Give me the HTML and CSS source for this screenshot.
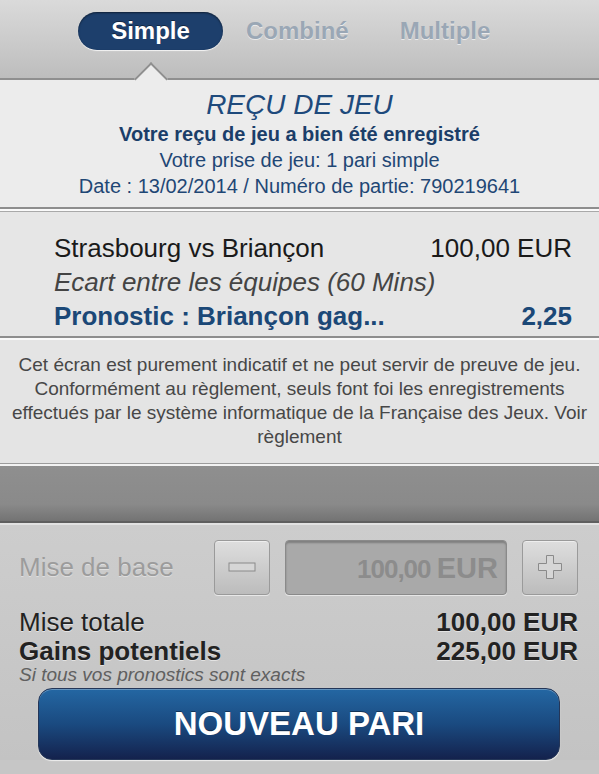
FILE: index.html
```html
<!DOCTYPE html>
<html lang="fr">

<head>
    <meta charset="UTF-8">
    <title>Reçu de jeu</title>
    <link rel="stylesheet" href="styles.css">
</head>

<body>

    <div class="tabs">
        <span class="tab active">Simple</span>
        <span class="tab combo">Combiné</span>
        <span class="tab multi">Multiple</span>
    </div>

    <div class="receipt">
        <h1>REÇU DE JEU</h1>
        <p class="ok">Votre reçu de jeu a bien été enregistré</p>
        <p>Votre prise de jeu: 1 pari simple</p>
        <p>Date : 13/02/2014 / Numéro de partie: 790219641</p>
    </div>

    <div class="divider double"></div>

    <div class="bet">
        <div class="row">
            <span>Strasbourg vs Briançon</span>
            <span>100,00 EUR</span>
        </div>
        <div class="row type">
            <span>Ecart entre les équipes (60 Mins)</span>
        </div>
        <div class="row pick">
            <span>Pronostic : Briançon gag...</span>
            <span>2,25</span>
        </div>
    </div>

    <div class="divider"></div>

    <div class="notice">
        Cet écran est purement indicatif et ne peut servir de preuve de jeu.<br>
        Conformément au règlement, seuls font foi les enregistrements<br>
        effectués par le système informatique de la Française des Jeux. Voir<br>
        règlement
    </div>

    <div class="band"></div>

    <div class="panel">
        <div class="stake">
            <span class="stake_label">Mise de base</span>
            <span class="step">
                <svg width="28" height="10" viewBox="0 0 28 10">
                    <rect x="1" y="1" width="26" height="8" fill="#d6d6d6" stroke="#8a8a8a" stroke-width="1" />
                </svg>
            </span>
            <span class="amount">100,00 <b>EUR</b></span>
            <span class="step">
                <svg width="26" height="26" viewBox="0 0 26 26">
                    <path d="M9.5 1.5h7v8h8v7h-8v8h-7v-8h-8v-7h8z" fill="#d6d6d6" stroke="#8a8a8a" stroke-width="1" />
                </svg>
            </span>
        </div>
        <div class="line total">
            <span>Mise totale</span>
            <b>100,00 EUR</b>
        </div>
        <div class="line gains">
            <b>Gains potentiels</b>
            <b>225,00 EUR</b>
        </div>
        <div class="hint">Si tous vos pronostics sont exacts</div>
        <button>NOUVEAU PARI</button>
    </div>

</body>

</html>
```

FILE: styles.css
```css
body {
    margin: 0;
    width: 599px;
    height: 774px;
    overflow: hidden;
    font-family: "Liberation Sans", Arial, sans-serif;
    background: #c6c6c6;
}

.tabs {
    height: 80px;
    box-sizing: border-box;
    padding: 12px 0 0 78px;
    display: flex;
    align-items: flex-start;
    background: linear-gradient(#dadada, #c9c9c9 60%, #bdbdbd);
    border-bottom: 2px solid #8f8f8f;
}

.tab {
    height: 38px;
    line-height: 38px;
    font-size: 24px;
    font-weight: bold;
    color: #9aa7b5;
    text-shadow: 0 1px 0 rgba(255, 255, 255, 0.6);
}

.tab.active {
    width: 145px;
    text-align: center;
    color: #fff;
    background: #1d3f6c;
    border-radius: 20px;
    box-shadow: 0 1px 1px rgba(255, 255, 255, 0.8), inset 0 1px 2px rgba(0, 0, 0, 0.5);
    text-shadow: 0 -1px 0 rgba(0, 0, 0, 0.4);
}

.tab.combo {
    margin-left: 23px;
}

.tab.multi {
    margin-left: 51px;
}

.receipt {
    position: relative;
    background: #ececec;
    text-align: center;
    padding: 9px 0 8px;
    color: #1f4775;
}

/* notch under the active tab */
.receipt::before {
    content: "";
    position: absolute;
    left: 139px;
    top: -13px;
    width: 22px;
    height: 22px;
    background: #ececec;
    border-left: 2px solid #8f8f8f;
    border-top: 2px solid #8f8f8f;
    transform: rotate(45deg);
}

.receipt h1 {
    position: relative;
    margin: 0;
    font-size: 28px;
    line-height: 32px;
    font-weight: normal;
    font-style: italic;
    color: #1e4a7c;
}

.receipt p {
    margin: 0;
    font-size: 20px;
    line-height: 26px;
}

.receipt p.ok {
    font-weight: bold;
    color: #1b3e69;
}

.divider {
    height: 4px;
    background: linear-gradient(#8e8e8e 0, #8e8e8e 2px, #fafafa 2px, #fafafa 4px);
}

.divider.double {
    height: 7px;
    background: linear-gradient(#8e8e8e 0, #8e8e8e 2px, #fafafa 2px, #fafafa 4px, #a9a9a9 4px, #a9a9a9 5px, #e6e6e6 5px);
}

.bet {
    background: #e6e6e6;
    padding: 17px 27px 3px 54px;
}

.row {
    display: flex;
    justify-content: space-between;
    font-size: 26px;
    line-height: 34px;
    color: #1a1a1a;
}

.row.type {
    font-style: italic;
    color: #444;
}

.row.pick {
    font-weight: bold;
    color: #1b4877;
}

.notice {
    background: #e4e4e4;
    padding: 13px 0 14px;
    text-align: center;
    white-space: nowrap;
    font-size: 19px;
    line-height: 24px;
    color: #474747;
}

.band {
    height: 57px;
    border-top: 1px solid #9c9c9c;
    border-bottom: 2px solid #5f5f5f;
    box-shadow: inset 0 1px 0 #f2f2f2, inset 0 2px 0 #f2f2f2, 0 2px 0 #e2e2e2;
    background: linear-gradient(#8f8f8f, #8a8a8a 70%, #737373);
}

.panel {
    margin-top: 2px;
    padding: 14px 21px 0 19px;
    background: linear-gradient(#cdcdcd, #c3c3c3);
}

.stake {
    display: flex;
    align-items: center;
    height: 56px;
}

.stake_label {
    flex: 1;
    font-size: 26px;
    color: #9c9c9c;
    text-shadow: 0 1px 0 rgba(255, 255, 255, 0.4);
}

.step {
    width: 54px;
    height: 53px;
    display: flex;
    align-items: center;
    justify-content: center;
    border: 1px solid #9a9a9a;
    border-radius: 4px;
    background: linear-gradient(#dedede, #bcbcbc);
    box-shadow: inset 0 1px 0 #eee, 0 1px 0 #e8e8e8;
}

.amount {
    width: 222px;
    height: 55px;
    margin: 0 15px;
    box-sizing: border-box;
    padding-right: 8px;
    line-height: 55px;
    text-align: right;
    font-size: 26px;
    font-weight: bold;
    letter-spacing: -1px;
    color: #8c8c8c;
    background: #a9a9a9;
    border: 1px solid #8a8a8a;
    border-radius: 4px;
    box-shadow: inset 0 2px 2px rgba(0, 0, 0, 0.25), 0 1px 0 #e6e6e6;
}

.amount b {
    font-size: 29px;
    letter-spacing: 0;
}

.line {
    display: flex;
    justify-content: space-between;
    font-size: 26px;
    line-height: 32px;
    color: #222;
    text-shadow: 0 1px 0 rgba(255, 255, 255, 0.5);
}

.line.total {
    margin-top: 11px;
}

.line.gains {
    line-height: 26px;
}

.hint {
    margin-top: 1px;
    font-size: 19px;
    line-height: 20px;
    font-style: italic;
    color: #606060;
}

button {
    display: block;
    width: 522px;
    height: 72px;
    margin: 3px 0 0 19px;
    font-family: "Liberation Sans", Arial, sans-serif;
    font-size: 33px;
    font-weight: bold;
    color: #fff;
    border: 1px solid #243658;
    border-radius: 14px;
    background: linear-gradient(#2467a3, #1a4a80 50%, #14224d);
    box-shadow: inset 0 1px 0 rgba(255, 255, 255, 0.3), 0 1px 1px #eee;
    text-shadow: 0 -1px 0 rgba(0, 0, 0, 0.4);
}
```
